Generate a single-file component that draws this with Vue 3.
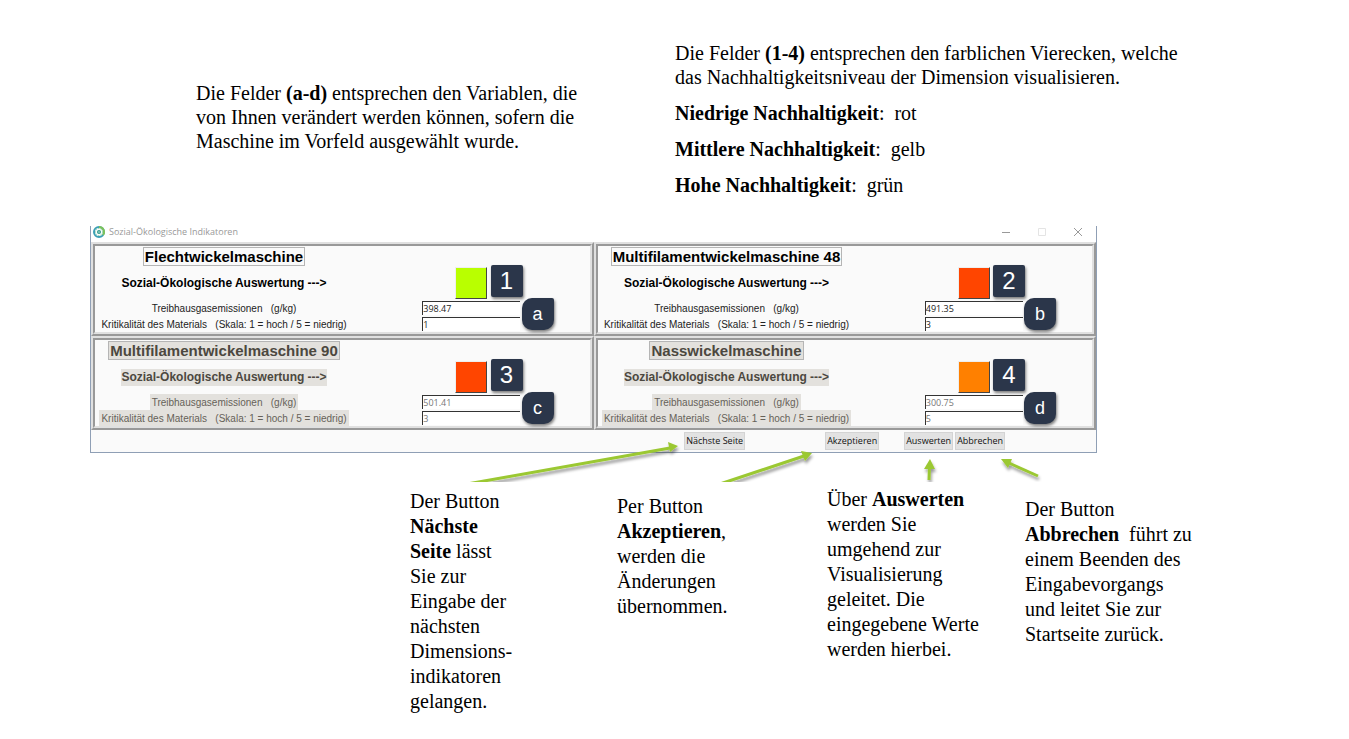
<script setup>
import { reactive } from 'vue'

const machines = reactive([
  { id: 'flecht', name: 'Flechtwickelmaschine', level: 'green', number: '1', letter: 'a', emission: '398.47', critical: '1', disabled: false },
  { id: 'multi48', name: 'Multifilamentwickelmaschine 48', level: 'red', number: '2', letter: 'b', emission: '491.35', critical: '3', disabled: false },
  { id: 'multi90', name: 'Multifilamentwickelmaschine 90', level: 'red', number: '3', letter: 'c', emission: '501.41', critical: '3', disabled: true },
  { id: 'nass', name: 'Nasswickelmaschine', level: 'orange', number: '4', letter: 'd', emission: '300.75', critical: '5', disabled: true }
])
const emissionLabel = 'Treibhausgasemissionen   (g/kg)'
const criticalLabel = 'Kritikalität des Materials   (Skala: 1 = hoch / 5 = niedrig)'
</script>

<template>
  <main class="page">
    <header class="intro">
      <p class="intro-fields">
        Die Felder <b>(a-d)</b> entsprechen den Variablen, die<br />
        von Ihnen verändert werden können, sofern die<br />
        Maschine im Vorfeld ausgewählt wurde.
      </p>
      <div class="intro-levels">
        <p>
          Die Felder <b>(1-4)</b> entsprechen den farblichen Vierecken, welche<br />
          das Nachhaltigkeitsniveau der Dimension visualisieren.
        </p>
        <p><b>Niedrige Nachhaltigkeit</b>:&nbsp; rot</p>
        <p><b>Mittlere Nachhaltigkeit</b>:&nbsp; gelb</p>
        <p><b>Hohe Nachhaltigkeit</b>:&nbsp; grün</p>
      </div>
    </header>

    <section class="window">
      <div class="titlebar">
        <svg class="logo" viewBox="0 0 12 12" aria-hidden="true">
          <circle cx="6" cy="6" r="5" fill="none" stroke="#3c9fb4" stroke-width="2" />
          <path d="M6 1a5 5 0 0 1 4 8" fill="none" stroke="#7cc25a" stroke-width="2" />
          <circle cx="6" cy="6" r="3.500" fill="none" stroke="#8fd0a8" stroke-width="1" stroke-dasharray="1.500 1" />
          <circle cx="6" cy="6" r="2" fill="#2f9a8c" />
          <circle cx="6" cy="6" r="0.700" fill="#dff3ea" />
        </svg>
        <span class="caption">Sozial-Ökologische Indikatoren</span>
        <div class="controls">
          <button type="button" aria-label="Minimieren"><svg viewBox="0 0 10 10"><path d="M1 5.5h8" stroke="#999" /></svg></button>
          <button type="button" aria-label="Maximieren"><svg viewBox="0 0 10 10"><path d="M1.5 1.5h7v7h-7z" stroke="#e4e4e4" /></svg></button>
          <button type="button" aria-label="Schließen"><svg viewBox="0 0 10 10"><path d="M1 1l8 8M9 1l-8 8" stroke="#999" /></svg></button>
        </div>
      </div>

      <div class="panels">
        <section v-for="m in machines" :key="m.id" class="panel" :class="{ disabled: m.disabled }">
          <div class="form">
            <h2 class="name"><span>{{ m.name }}</span></h2>
            <strong class="rating"><span>Sozial-Ökologische Auswertung ---&gt;</span></strong>
            <div class="swatch" :class="m.level"></div>
            <label class="label" :for="m.id + '-emission'"><span>{{ emissionLabel }}</span></label>
            <input :id="m.id + '-emission'" v-model="m.emission" class="entry" type="text" :disabled="m.disabled" />
            <label class="label" :for="m.id + '-critical'"><span>{{ criticalLabel }}</span></label>
            <input :id="m.id + '-critical'" v-model="m.critical" class="entry" type="text" :disabled="m.disabled" />
          </div>
          <span class="badge number">{{ m.number }}</span>
          <span class="badge letter">{{ m.letter }}</span>
        </section>
      </div>

      <div class="actions">
        <button type="button" class="next">Nächste Seite</button>
        <button type="button" class="accept">Akzeptieren</button>
        <button type="button">Auswerten</button>
        <button type="button">Abbrechen</button>
      </div>
    </section>

    <section class="notes">
      <svg class="arrows" viewBox="0 0 600 42" aria-hidden="true">
        <defs>
          <filter id="soft" x="-10%" y="-30%" width="120%" height="180%">
            <feDropShadow dx="1" dy="3" stdDeviation="1.5" flood-color="#000" flood-opacity="0.4" />
          </filter>
        </defs>
        <g filter="url(#soft)" fill="#9bc832" stroke="#9bc832" stroke-width="3">
          <path d="M10 43.500L210 8" />
          <path d="M218 6l-10-4 2 10z" stroke="none" />
          <path d="M260 44L344 16" />
          <path d="M352 13l-11-2 4 10z" stroke="none" />
          <path d="M469 40L469.500 26" />
          <path d="M470 19l-6 10h11z" stroke="none" />
          <path d="M578 36L549 23" />
          <path d="M541 19l11 0-4 9z" stroke="none" />
        </g>
      </svg>
      <p class="note-next">
        Der Button<br /><b>Nächste<br />Seite</b> lässt<br />Sie zur<br />Eingabe der<br />nächsten<br />Dimensions-<br />indikatoren<br />gelangen.
      </p>
      <p class="note-accept">
        Per Button<br /><b>Akzeptieren</b>,<br />werden die<br />Änderungen<br />übernommen.
      </p>
      <p class="note-rate">
        Über <b>Auswerten</b><br />werden Sie<br />umgehend zur<br />Visualisierung<br />geleitet. Die<br />eingegebene Werte<br />werden hierbei.
      </p>
      <p class="note-cancel">
        Der Button<br /><b>Abbrechen</b>&nbsp; führt zu<br />einem Beenden des<br />Eingabevorgangs<br />und leitet Sie zur<br />Startseite zurück.
      </p>
    </section>
  </main>
</template>

<style>
body {
  margin: 0;
  background: #fff;
}
</style>

<style scoped>
.page {
  color: #000;
  font: 20px/24px "Liberation Serif", serif;
}
p,
h2 {
  margin: 0;
}
.intro {
  display: grid;
  grid-template-columns: 479px 1fr;
  padding: 41px 0 29px 196px;
  white-space: nowrap;
}
.intro-fields {
  padding-top: 40px;
}
.intro-levels {
  display: grid;
  gap: 12px;
}
.window {
  margin: 0 252px 0 90px;
  border: solid #8f9fb5;
  border-width: 0 1px 1px;
  background: #fafafa;
  font-family: "Liberation Sans", Arial, sans-serif;
}
.titlebar {
  display: flex;
  align-items: center;
  height: 16px;
  padding: 0 13px 0 2px;
  background: #fff;
}
.logo {
  width: 12px;
  height: 12px;
  margin-top: -4px;
}
.caption {
  margin-left: 4px;
  margin-top: -5px;
  color: #999;
  font: 9px/12px "Open Sans", sans-serif;
}
.controls {
  display: flex;
  gap: 26px;
  margin-left: auto;
  margin-top: -4px;
}
.controls button {
  display: grid;
  width: 10px;
  height: 10px;
  padding: 0;
  border: 0;
  background: none;
}
.controls svg {
  width: 10px;
  height: 10px;
  fill: none;
}
.panels {
  display: grid;
  grid-template-columns: 1fr 1fr;
}
.panel {
  position: relative;
  border: 2px solid;
  border-color: #e0e0e0 #999 #999 #e0e0e0;
}
.form {
  display: grid;
  grid-template-columns: 258px 1fr 98px 1fr;
  grid-template-rows: 20px 34px 16px 16px;
  align-items: center;
  justify-items: center;
  border: 2px solid;
  border-color: #999 #e0e0e0 #e0e0e0 #999;
  white-space: pre;
}
.name,
.rating,
.label {
  grid-column: 1;
}
.name span {
  display: block;
  padding: 0 1px;
  border: 1px solid #b5b5b5;
  font-size: 15px;
  line-height: 17px;
}
.rating span {
  display: block;
  font-size: 12px;
  line-height: 17px;
}
.label span {
  display: block;
  padding: 2px 2px 0;
  color: #222;
  font-size: 10px;
  line-height: 14px;
}
.label {
  line-height: 16px;
}
.disabled .name,
.disabled .rating {
  color: #4c483f;
}
.disabled .label span {
  color: #666159;
}
.disabled .name span,
.disabled .rating span,
.disabled .label span {
  background: #e3e1dd;
}
.swatch {
  grid-column: 3;
  box-sizing: border-box;
  width: 32px;
  height: 32px;
  border: 1px solid;
  border-color: #eee #444 #444 #eee;
}
.green {
  background: #b9ff00;
}
.red {
  background: #ff4500;
}
.orange {
  background: #ff8000;
}
.entry {
  grid-column: 3;
  box-sizing: border-box;
  width: 98px;
  height: 14px;
  padding: 0;
  border: solid #333;
  border-width: 1px 0 0 1px;
  border-radius: 0;
  background: #fff;
  color: #222;
  font: 9px/12px "Open Sans", sans-serif;
}
.entry:disabled {
  color: #777;
}
.badge {
  position: absolute;
  width: 32px;
  height: 32px;
  background: #2b364a;
  box-shadow: 1px 2px 3px rgba(0, 0, 0, 0.5);
  color: #fff;
  text-align: center;
}
.number {
  top: 21px;
  right: 69px;
  border-radius: 2px;
  font-size: 24px;
  line-height: 32px;
}
.letter {
  top: 54px;
  right: 38px;
  border-radius: 10px 2px 10px 10px;
  font-size: 18px;
  line-height: 32px;
}
.actions {
  display: flex;
  justify-content: flex-end;
  gap: 2px;
  padding: 2px 91px 2px 0;
}
.actions button {
  height: 18px;
  padding: 0 1px;
  border: 1px solid #d4d4d4;
  background: #e2e2e2;
  color: #111;
  font: 9px/14px "Open Sans", sans-serif;
  white-space: nowrap;
}
.actions .next {
  margin-right: 78px;
}
.actions .accept {
  margin-right: 23px;
}
.notes {
  position: relative;
  display: grid;
  grid-template-columns: 207px 210px 198px 324px;
  align-items: start;
  justify-content: end;
  padding-top: 34px;
  line-height: 25px;
  white-space: nowrap;
}
.arrows {
  position: absolute;
  top: -13px;
  right: 289px;
  width: 600px;
  height: 42px;
}
.note-next {
  padding-top: 2px;
}
.note-accept {
  padding-top: 7px;
}
.note-cancel {
  padding-top: 10px;
}
</style>
